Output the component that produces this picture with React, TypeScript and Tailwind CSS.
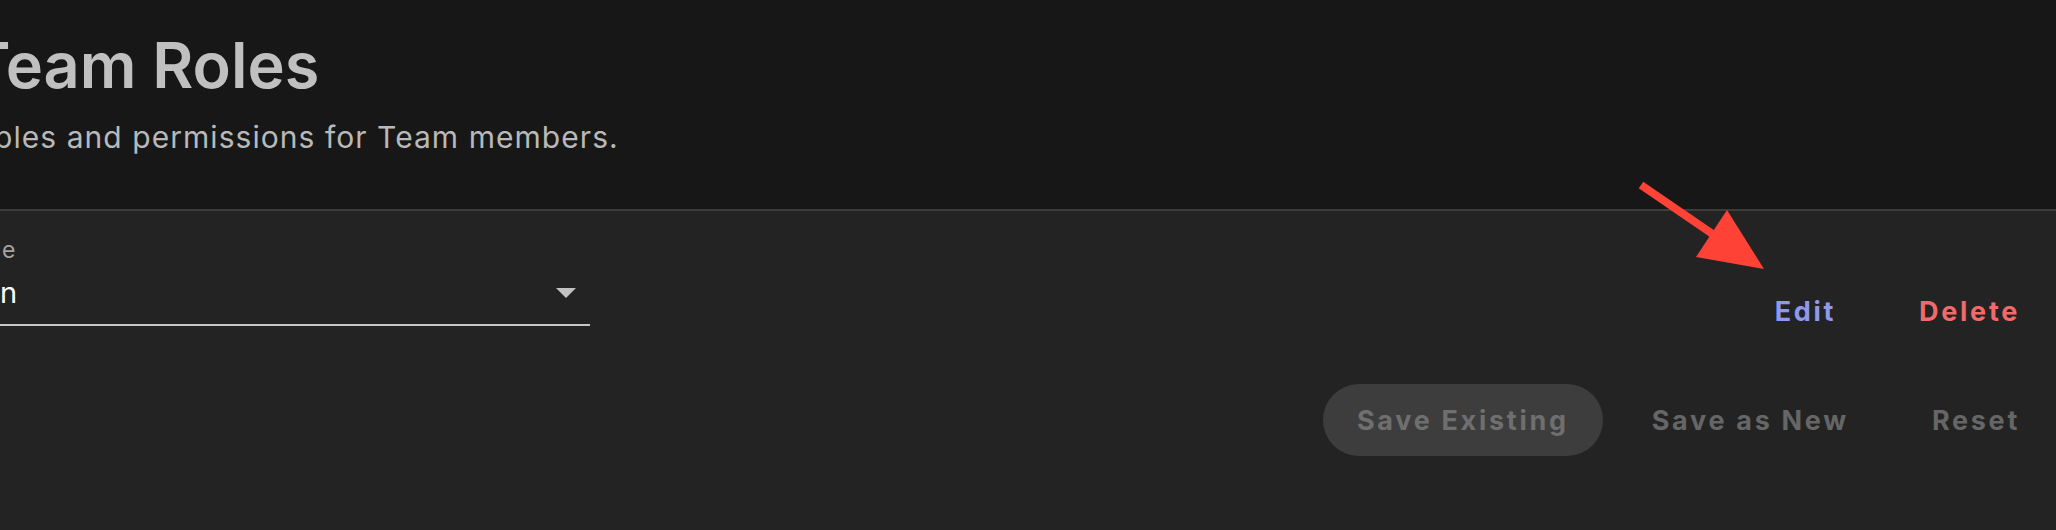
import React from "react";

const font = { fontFamily: "Inter, 'Noto Sans', sans-serif" };

function TextButton({
  children,
  color,
  filled,
}: {
  children: React.ReactNode;
  color: string;
  filled?: boolean;
}) {
  return (
    <button
      className={
        "inline-flex h-[72px] items-center rounded-full px-[34px] text-[27px] font-bold leading-none tracking-[0.1em] " +
        (filled ? "bg-[#3d3d3d] " : "bg-transparent ") +
        color
      }
    >
      {children}
    </button>
  );
}

export default function App() {
  return (
    <div
      className="relative h-[530px] w-[2056px] overflow-hidden bg-[#232323]"
      style={font}
    >
      {/* Header */}
      <div className="h-[211px] border-b-2 border-[#3c3c3c] bg-[#171717] pt-[34px]">
        <h1 className="ml-[-31px] whitespace-nowrap text-[63px] font-semibold leading-none tracking-[0em] text-[#c0c0c0]">
          Team Roles
        </h1>
        <p className="ml-[-6px] mt-[25px] whitespace-nowrap text-[30px] leading-none tracking-[0.035em] text-[#b9b9b9]">
          ples and permissions for Team members.
        </p>
      </div>

      {/* Body */}
      <div className="flex flex-col pr-[2px]">
        <div className="flex items-start justify-between">
          {/* Select field */}
          <div className="ml-[-40px] mt-[28px] flex w-[630px] flex-col">
            <div className="pl-[42px] text-[23px] leading-none text-[#a3a3a3]">e</div>
            <div className="mt-[16px] flex items-center justify-between border-b-2 border-[#c6c6c6] pb-[17px] pr-[14px]">
              <span className="pl-[40px] text-[29px] leading-none text-white">n</span>
              <svg width="20" height="10" viewBox="0 0 20 10" className="block">
                <polygon points="0,0 20,0 10,10" fill="#c2c2c2" />
              </svg>
            </div>
          </div>

          {/* Edit / Delete */}
          <div className="mt-[64px] flex items-center gap-[15px]">
            <TextButton color="text-[#8e99ee]">Edit</TextButton>
            <TextButton color="text-[#f06a6a]">Delete</TextButton>
          </div>
        </div>

        {/* Save row */}
        <div className="mt-[37px] flex items-center justify-end gap-[15px]">
          <TextButton color="text-[#6f6f6f]" filled>
            Save Existing
          </TextButton>
          <TextButton color="text-[#666666]">Save as New</TextButton>
          <TextButton color="text-[#666666]">Reset</TextButton>
        </div>
      </div>

      {/* Annotation arrow */}
      <svg
        className="pointer-events-none absolute left-0 top-0"
        width="2056"
        height="530"
        viewBox="0 0 2056 530"
      >
        <line
          x1="1641"
          y1="185"
          x2="1714"
          y2="235"
          stroke="#ff4236"
          strokeWidth="8"
        />
        <polygon points="1727,210 1696,257 1764,269" fill="#ff4236" />
      </svg>
    </div>
  );
}
